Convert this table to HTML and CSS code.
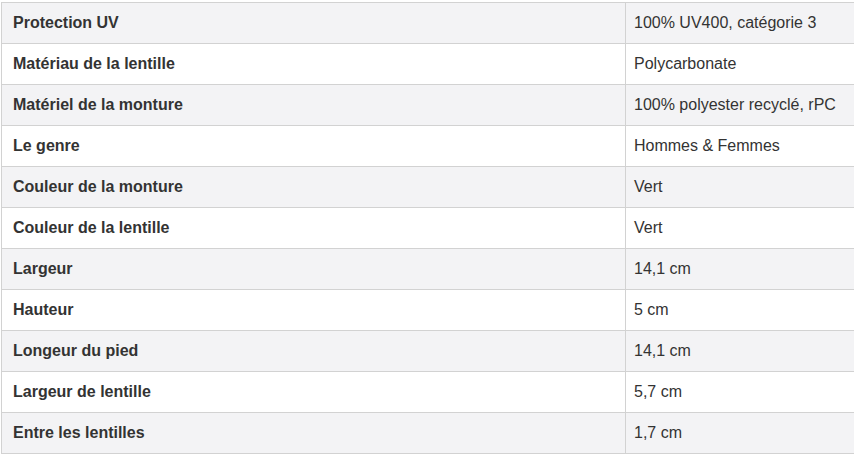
FILE: index.html
```html
<!DOCTYPE html>
<html lang="fr">
<head>
<meta charset="utf-8">
<link rel="stylesheet" href="styles.css">
</head>
<body>
<table class="specs">
  <tbody>
    <tr><th>Protection UV</th><td>100% UV400, catégorie 3</td></tr>
    <tr><th>Matériau de la lentille</th><td>Polycarbonate</td></tr>
    <tr><th>Matériel de la monture</th><td>100% polyester recyclé, rPC</td></tr>
    <tr><th>Le genre</th><td>Hommes &amp; Femmes</td></tr>
    <tr><th>Couleur de la monture</th><td>Vert</td></tr>
    <tr><th>Couleur de la lentille</th><td>Vert</td></tr>
    <tr><th>Largeur</th><td>14,1 cm</td></tr>
    <tr><th>Hauteur</th><td>5 cm</td></tr>
    <tr><th>Longeur du pied</th><td>14,1 cm</td></tr>
    <tr><th>Largeur de lentille</th><td>5,7 cm</td></tr>
    <tr><th>Entre les lentilles</th><td>1,7 cm</td></tr>
  </tbody>
</table>
</body>
</html>
```

FILE: styles.css
```css
html, body {
  margin: 0;
  padding: 0;
  background: #ffffff;
  overflow: hidden;
}
body {
  padding: 2px 0 0 1px;
  font-family: "Liberation Sans", Arial, Helvetica, sans-serif;
  font-size: 16px;
  color: #333333;
}
.specs {
  border-collapse: collapse;
  width: 870px;
  table-layout: fixed;
}
.specs tr:nth-child(odd) {
  background: #f3f3f5;
}
.specs th,
.specs td {
  border: 1px solid #d2d2d2;
  height: 41px;
  padding: 0;
  line-height: 20px;
  text-align: left;
  vertical-align: middle;
  box-sizing: border-box;
}
.specs th {
  width: 624px;
  font-weight: bold;
  padding-left: 11px;
}
.specs td {
  padding-left: 8px;
}
```
